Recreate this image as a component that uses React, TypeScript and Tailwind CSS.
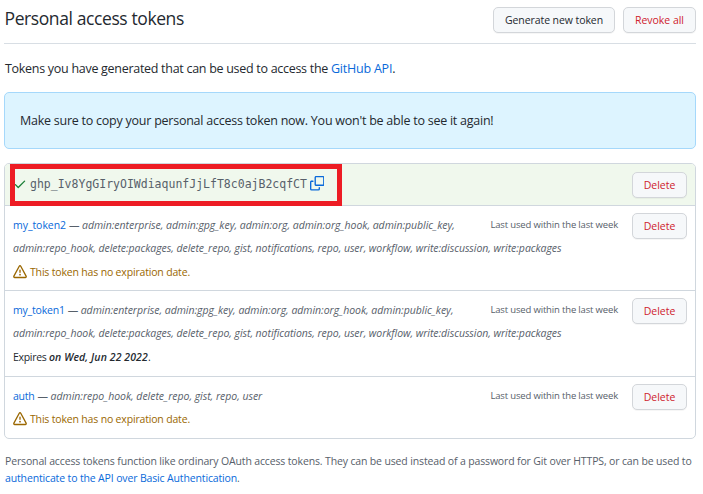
import type { ReactNode } from "react";

function AlertIcon() {
  return (
    <svg viewBox="0 0 16 16" className="h-[14px] w-[14px] shrink-0 fill-[#9a6700]" aria-hidden="true">
      <path
        fillRule="evenodd"
        d="M8.22 1.754a.25.25 0 00-.44 0L1.698 13.132a.25.25 0 00.22.368h12.164a.25.25 0 00.22-.368L8.22 1.754zm-1.763-.707c.659-1.234 2.427-1.234 3.086 0l6.082 11.378A1.75 1.75 0 0114.082 15H1.918a1.75 1.75 0 01-1.543-2.575L6.457 1.047zM9 11a1 1 0 11-2 0 1 1 0 012 0zm-.25-5.25a.75.75 0 00-1.5 0v2.5a.75.75 0 001.5 0v-2.5z"
      />
    </svg>
  );
}

function CheckIcon() {
  return (
    <svg viewBox="0 0 16 16" className="h-[14px] w-[14px] shrink-0 fill-[#1a7f37]" aria-hidden="true">
      <path
        fillRule="evenodd"
        d="M13.78 4.22a.75.75 0 010 1.06l-7.25 7.25a.75.75 0 01-1.06 0L2.22 9.28a.75.75 0 011.06-1.06L6 10.94l6.72-6.72a.75.75 0 011.06 0z"
      />
    </svg>
  );
}

function CopyIcon() {
  return (
    <svg viewBox="0 0 16 16" className="h-[14.5px] w-[14.5px] shrink-0 fill-[#0969da]" aria-hidden="true">
      <path
        fillRule="evenodd"
        d="M0 6.75C0 5.784.784 5 1.75 5h1.5a.75.75 0 010 1.5h-1.5a.25.25 0 00-.25.25v7.5c0 .138.112.25.25.25h7.5a.25.25 0 00.25-.25v-1.5a.75.75 0 011.5 0v1.5A1.75 1.75 0 019.25 16h-7.5A1.75 1.75 0 010 14.25v-7.5z"
      />
      <path
        fillRule="evenodd"
        d="M5 1.75C5 .784 5.784 0 6.75 0h7.5C15.216 0 16 .784 16 1.75v7.5A1.75 1.75 0 0114.25 11h-7.5A1.75 1.75 0 015 9.25v-7.5zm1.75-.25a.25.25 0 00-.25.25v7.5c0 .138.112.25.25.25h7.5a.25.25 0 00.25-.25v-7.5a.25.25 0 00-.25-.25h-7.5z"
      />
    </svg>
  );
}

function DeleteButton() {
  return (
    <button className="flex h-[26px] w-[55px] shrink-0 items-center justify-center rounded-[5px] border border-[#d3d6da] bg-[#f6f8fa] pt-px text-[10.5px] font-medium tracking-[-0.03px] text-[#cf222e] shadow-[0_1px_0_rgba(27,31,36,0.04)]">
      Delete
    </button>
  );
}

function NoExpiry() {
  return (
    <p className="flex items-center gap-[3px] text-[#9a6700]">
      <span className="-mt-px">
        <AlertIcon />
      </span>
      <span className="tracking-[-0.173px]">This token has no expiration date.</span>
    </p>
  );
}

function TokenRow({ name, scopes, children }: { name: ReactNode; scopes: string[]; children: ReactNode }) {
  return (
    <li className="flex h-[86px] items-start border-t border-[#d0d7de] pt-[7px] pr-2 pl-2 last:h-[62px] nth-2:h-[85px]">
      <div className="mt-[0.5px] w-0 grow whitespace-nowrap leading-[23.6px]">
        <div className="flex justify-between pr-[14px]">
          <p className="flex text-[#57606a]">
            {name}
            <span className="ml-[3px] w-[13px]">—</span>
            <em className="tracking-[-0.03px]">{scopes[0]}</em>
          </p>
          <span className="-mt-px text-[9.5px] tracking-[-0.16px] text-[#57606a]">Last used within the last week</span>
        </div>
        {scopes[1] && <p className="text-[#57606a] italic tracking-[-0.05px]">{scopes[1]}</p>}
        {children}
      </div>
      <DeleteButton />
    </li>
  );
}

const adminScopes = [
  "admin:enterprise, admin:gpg_key, admin:org, admin:org_hook, admin:public_key,",
  "admin:repo_hook, delete:packages, delete_repo, gist, notifications, repo, user, workflow, write:discussion, write:packages",
];

export default function App() {
  return (
    <main className="h-[494px] w-[703px] overflow-hidden bg-white pr-[7px] pl-1 font-['Open_Sans','Noto_Sans',sans-serif] text-[10.5px] text-[#24292f]">
      <header className="flex h-11 justify-between border-b border-[#d8dee4]">
        <h1 className="pt-[5px] pl-[0.5px] text-[17.5px] leading-[26px] tracking-[-0.4px] whitespace-nowrap">Personal access tokens</h1>
        <div className="flex gap-2 pt-[7px] font-medium">
          <button className="h-[26px] w-[122px] rounded-[5px] border border-[#d3d6da] bg-[#f6f8fa] pt-px tracking-[-0.08px] shadow-[0_1px_0_rgba(27,31,36,0.04)]">
            Generate new token
          </button>
          <button className="h-[26px] w-[73px] rounded-[5px] border border-[#d3d6da] bg-[#f6f8fa] pt-px tracking-[-0.03px] text-[#cf222e] shadow-[0_1px_0_rgba(27,31,36,0.04)]">
            Revoke all
          </button>
        </div>
      </header>

      <p className="mt-[15px] flex pl-px text-[12.5px] leading-5 whitespace-nowrap">
        <span className="mr-[3px] tracking-[-0.288px]">Tokens you have generated that can be used to access the</span>
        <a className="tracking-[-0.22px] text-[#0969da]">GitHub API</a>.
      </p>

      <div className="mt-[13px] flex h-[57px] items-center rounded-[5px] border border-[#a5d8fb] bg-[#ddf4ff] pt-[2px] pl-[15px] text-[12.5px] tracking-[-0.242px]">
        Make sure to copy your personal access token now. You won't be able to see it again!
      </div>

      <ul className="mt-[14px] h-[276px] rounded-[5px] border border-[#d0d7de]">
        <li className="relative flex h-[41px] items-center justify-between rounded-t-[4px] bg-[#f0f8ed] pr-2 pl-2">
          <div className="flex items-center text-[#57606a]">
            <span className="-mt-px">
              <CheckIcon />
            </span>
            <code className="ml-[3px] font-['DejaVu_Sans_Mono',monospace] text-[11.5px]">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</code>
            <span className="-mt-[2px] ml-[3px]">
              <CopyIcon />
            </span>
          </div>
          <div className="pt-px">
            <DeleteButton />
          </div>
          <span className="absolute top-0 left-[5px] z-10 h-[42px] w-[332px] border-[5px] border-[#ed1c24]" />
        </li>
        <TokenRow name={<a className="tracking-[-0.05px] text-[#0969da]">my_token2</a>} scopes={adminScopes}>
          <NoExpiry />
        </TokenRow>
        <TokenRow name={<a className="tracking-[-0.2px] text-[#0969da]">my_token1</a>} scopes={adminScopes}>
          <p>
            <span className="tracking-[-0.3px]">Expires </span>
            <em className="font-semibold tracking-[0.1px]">on Wed, Jun 22 2022</em>.
          </p>
        </TokenRow>
        <TokenRow
          name={<a className="tracking-[-0.22px] text-[#0969da]">auth</a>}
          scopes={["admin:repo_hook, delete_repo, gist, repo, user"]}
        >
          <NoExpiry />
        </TokenRow>
      </ul>

      <footer className="mt-[14px] pl-px leading-[17px] tracking-[-0.145px] whitespace-nowrap text-[#57606a]">
        <p>
          Personal access tokens function like ordinary OAuth access tokens. They can be used instead of a password for Git over HTTPS, or can be used to
        </p>
        <p>
          <a className="text-[#0969da]">authenticate to the API over Basic Authentication</a>.
        </p>
      </footer>
    </main>
  );
}
